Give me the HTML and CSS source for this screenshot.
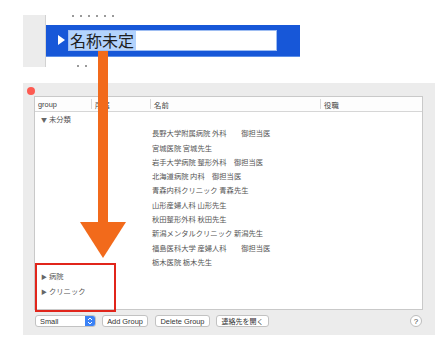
FILE: index.html
```html
<!DOCTYPE html>
<html lang="ja">
<head>
<meta charset="utf-8">
<title>Groups</title>
<link rel="stylesheet" href="styles.css">
</head>
<body>
<div class="top">
  <div class="strip"></div>
  <div class="rowwrap">
    <div class="dots dots-a"></div>
    <div class="selrow">
      <svg class="tri" width="7" height="10" viewBox="0 0 7 10"><path d="M0 0 L7 5 L0 10 Z" fill="#fff"/></svg>
      <div class="field"><span class="sel">名称未定</span></div>
    </div>
    <div class="dots dots-b"></div>
  </div>
</div>

<div class="window">
  <div class="titlebar"><span class="close"></span></div>
  <div class="table">
    <div class="thead">
      <div class="th c-group">group</div>
      <div class="th c-belong">所属</div>
      <div class="th c-name">名前</div>
      <div class="th c-role">役職</div>
    </div>
    <div class="tbody">
      <div class="row grp"><span class="disc">▼</span>未分類</div>
      <div class="row item">長野大学附属病院 外科　　御担当医</div>
      <div class="row item">宮城医院 宮城先生</div>
      <div class="row item">岩手大学病院 整形外科　御担当医</div>
      <div class="row item">北海道病院 内科　御担当医</div>
      <div class="row item">青森内科クリニック 青森先生</div>
      <div class="row item">山形産婦人科 山形先生</div>
      <div class="row item">秋田整形外科 秋田先生</div>
      <div class="row item">新潟メンタルクリニック 新潟先生</div>
      <div class="row item">福島医科大学 産婦人科　　御担当医</div>
      <div class="row item">栃木医院 栃木先生</div>
      <div class="row grp"><span class="disc">▶</span>病院</div>
      <div class="row grp"><span class="disc">▶</span>クリニック</div>
    </div>
  </div>
  <div class="toolbar">
    <div class="popup"><span class="popup-label">Small</span><span class="stepper"><svg width="6" height="8" viewBox="0 0 6 8"><path d="M1 3 L3 1 L5 3 M1 5 L3 7 L5 5" fill="none" stroke="#fff" stroke-width="1"/></svg></span></div>
    <div class="btn btn-add">Add Group</div>
    <div class="btn btn-del">Delete Group</div>
    <div class="btn btn-open">連絡先を開く</div>
    <div class="help">?</div>
  </div>
  <div class="redbox"></div>
</div>

<svg class="arrow" width="46" height="207" viewBox="0 0 46 207">
  <rect x="18" y="0" width="10" height="174" fill="#f26a1b"/>
  <path d="M0 171 L46 171 L23 207 Z" fill="#f26a1b"/>
</svg>
</body>
</html>
```

FILE: styles.css
```css
* { box-sizing: border-box; }
html, body { margin: 0; padding: 0; background: #fff; }
body {
  font-family: "Liberation Sans", "Noto Sans CJK JP", sans-serif;
  color: #333;
  position: relative;
  width: 445px;
  height: 351px;
  overflow: hidden;
}

/* top zoomed fragment */
.top {
  display: flex;
  padding-top: 15px;
  padding-left: 23px;
  height: 67px;
}
.strip {
  width: 23px;
  height: 52px;
  background: #ececec;
  border-right: 1px solid #d2d2d2;
}
.rowwrap {
  display: flex;
  flex-direction: column;
  width: 254px;
}
.dots {
  height: 2px;
  background: repeating-linear-gradient(90deg, #9a9a9a 0 2px, transparent 2px 8px);
}
.dots-a { width: 46px; margin: 0 0 8px 26px; }
.dots-b { width: 14px; margin: 8px 0 0 31px; align-self: flex-start; }
.selrow {
  height: 32px;
  background: #1757d8;
  border-bottom: 1px solid #5c8fe8;
  display: flex;
  align-items: center;
  padding-left: 12px;
}
.tri { margin-right: 3px; margin-top: -1px; }
.field {
  width: 209px;
  height: 21px;
  margin-top: -1px;
  background: #fff;
  border: 1px solid #9ebdf2;
  display: flex;
  align-items: center;
}
.sel {
  background: #b3d3fd;
  height: 19px;
  line-height: 19px;
  font-size: 16px;
  color: #1e1e1e;
  padding: 0 2px 0 1px;
  font-family: "Noto Sans CJK JP", sans-serif;
}

/* window */
.window {
  position: relative;
  margin: 16px 0 0 23px;
  width: 412px;
  height: 252px;
  background: #ececec;
}
.titlebar {
  height: 13px;
  display: flex;
  padding: 4px 0 0 4px;
}
.close {
  width: 8px;
  height: 8px;
  border-radius: 50%;
  background: #fd5b52;
}
.table {
  margin-left: 11px;
  width: 389px;
  height: 214px;
  background: #fff;
  border: 1px solid #c9c9c9;
  font-size: 7.3px;
}
.thead {
  display: flex;
  height: 15px;
  border-bottom: 1px solid #d6d6d6;
  background: #fdfdfd;
}
.th {
  display: flex;
  align-items: center;
  padding-left: 3px;
  color: #444;
  font-size: 7.4px;
}
.c-group { width: 56px; }
.c-belong { width: 59px; border-left: 1px solid #d9d9d9; margin: 2px 0; }
.c-name { width: 170px; border-left: 1px solid #d9d9d9; margin: 2px 0; }
.c-role { flex: 1; border-left: 1px solid #d9d9d9; margin: 2px 0; }

.row {
  height: 14.3px;
  line-height: 14.3px;
  white-space: pre;
  color: #555;
  font-family: "Noto Sans CJK JP", sans-serif;
}
.grp { padding-left: 6px; }
.disc { font-size: 6px; margin-right: 2px; color: #666; }
.item { padding-left: 117px; }

.toolbar {
  display: flex;
  align-items: center;
  margin-top: 5px;
  padding-left: 12px;
  padding-right: 13px;
  height: 12px;
  font-size: 7.4px;
  color: #333;
}
.popup {
  width: 61px;
  height: 12px;
  background: #fff;
  border: 1px solid #c2c2c2;
  border-radius: 3px;
  display: flex;
  align-items: center;
  overflow: hidden;
}
.popup-label { flex: 1; padding-left: 4px; }
.stepper {
  width: 10px;
  height: 12px;
  background: #3b82f6;
  display: flex;
  align-items: center;
  justify-content: center;
}
.btn {
  height: 12px;
  background: #fff;
  border: 1px solid #c2c2c2;
  border-radius: 3px;
  display: flex;
  align-items: center;
  justify-content: center;
  white-space: nowrap;
}
.btn-add { width: 46px; margin-left: 6px; }
.btn-del { width: 55px; margin-left: 7px; }
.btn-open { width: 53px; margin-left: 6px; font-family: "Noto Sans CJK JP", sans-serif; font-size: 7px; }
.help {
  margin-left: auto;
  width: 12px;
  height: 12px;
  border-radius: 50%;
  background: #fff;
  border: 1px solid #bdbdbd;
  display: flex;
  align-items: center;
  justify-content: center;
  font-size: 8px;
  color: #444;
}

/* overlays */
.redbox {
  position: absolute;
  left: 12px;
  top: 180px;
  width: 81px;
  height: 49px;
  border: 2px solid #e1251b;
}
.arrow {
  position: absolute;
  left: 80px;
  top: 51px;
}
```
